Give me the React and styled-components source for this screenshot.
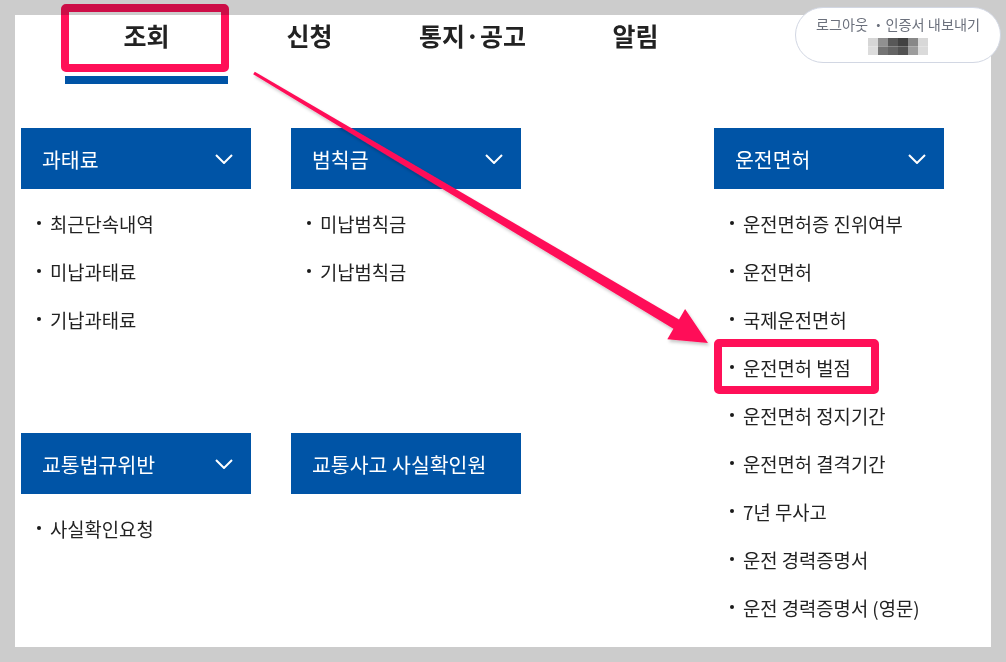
import React from 'react';
import styled, { createGlobalStyle } from 'styled-components';

const GlobalStyle = createGlobalStyle`
  html, body { margin: 0; padding: 0; background: #cccccc; }
  body { font-family: "Noto Sans CJK KR", "Noto Sans", sans-serif; }
  * { box-sizing: border-box; }
`;

const Page = styled.div`
  position: relative;
  width: 1006px;
  height: 662px;
  padding: 15px;
  overflow: hidden;
`;

const Panel = styled.main`
  background: #ffffff;
  width: 976px;
  height: 632px;
  padding-left: 6px;
`;

const Nav = styled.nav`
  display: flex;
  padding-left: 44px;
`;

const Tab = styled.div`
  width: 163px;
  height: 69px;
  display: flex;
  justify-content: center;
  align-items: flex-start;
  line-height: 40px;
  font-size: 25px;
  font-weight: 700;
  color: #222;
  border-bottom: 8px solid ${(p) => (p.$active ? '#0054a6' : 'transparent')};
`;

const Content = styled.div`
  display: flex;
  align-items: flex-start;
  gap: 193px;
  margin-top: 44px;
`;

const LeftGrid = styled.div`
  display: grid;
  grid-template-columns: 230px 230px;
  column-gap: 40px;
  row-gap: 90px;
  align-items: start;
  align-content: start;
`;

const Section = styled.section`
  display: flex;
  flex-direction: column;
  width: 230px;
`;

const Header = styled.div`
  height: 61px;
  background: #0054a6;
  color: #fff;
  display: flex;
  align-items: center;
  justify-content: space-between;
  padding: 0 18px 0 21px;
  font-size: 20.5px;
`;

const List = styled.ul`
  list-style: none;
  margin: 0;
  padding: 10px 0 0;
`;

const Item = styled.li`
  height: 48px;
  display: flex;
  align-items: center;
  font-size: 18.8px;
  color: #222;
  white-space: nowrap;
  &::before {
    content: '';
    flex: none;
    width: 4px;
    height: 4px;
    border-radius: 50%;
    background: #1a1a1a;
    margin: 0 9px 0 16px;
  }
`;

const Pill = styled.div`
  position: absolute;
  left: 795px;
  top: 7px;
  width: 206px;
  height: 56px;
  border: 1px solid #d2d7e3;
  border-radius: 28px;
  background: #fff;
  display: flex;
  flex-direction: column;
  align-items: center;
  padding-top: 7px;
`;

const PillText = styled.div`
  font-size: 14.2px;
  line-height: 18px;
  color: #6b707c;
  white-space: nowrap;
`;

const Mosaic = styled.svg`
  margin-top: 5px;
  display: block;
`;

/* annotation highlight frame drawn over the screenshot */
const Highlight = styled.div`
  position: absolute;
  left: ${(p) => p.$x}px;
  top: ${(p) => p.$y}px;
  width: ${(p) => p.$w}px;
  height: ${(p) => p.$h}px;
  border: 8px solid #ff1058;
  border-radius: 5px;
  mix-blend-mode: multiply;
  pointer-events: none;
`;

const ArrowLayer = styled.svg`
  position: absolute;
  left: 0;
  top: 0;
  pointer-events: none;
`;

const Chevron = () => (
  <svg width="18" height="10" viewBox="0 0 18 10">
    <path d="M1 1 L9 9 L17 1" fill="none" stroke="#fff" strokeWidth="2" />
  </svg>
);

const Block = ({ title, items, chevron = true }) => (
  <Section>
    <Header>
      <span>{title}</span>
      {chevron && <Chevron />}
    </Header>
    {items && items.length > 0 && (
      <List>
        {items.map((t) => (
          <Item key={t}>{t}</Item>
        ))}
      </List>
    )}
  </Section>
);

const mosaicRows = [
  ['#d6d6d6', '#909090', '#585858', '#424242', '#888888', '#d8d8d8'],
  ['#dcdcdc', '#747474', '#646464', '#525252', '#9c9c9c', '#dadada'],
];

export default function App() {
  return (
    <>
      <GlobalStyle />
      <Page>
        <Panel>
          <Nav>
            <Tab $active>조회</Tab>
            <Tab>신청</Tab>
            <Tab>통지·공고</Tab>
            <Tab>알림</Tab>
          </Nav>
          <Content>
            <LeftGrid>
              <Block title="과태료" items={['최근단속내역', '미납과태료', '기납과태료']} />
              <Block title="범칙금" items={['미납범칙금', '기납범칙금']} />
              <Block title="교통법규위반" items={['사실확인요청']} />
              <Block title="교통사고 사실확인원" chevron={false} />
            </LeftGrid>
            <Block
              title="운전면허"
              items={[
                '운전면허증 진위여부',
                '운전면허',
                '국제운전면허',
                '운전면허 벌점',
                '운전면허 정지기간',
                '운전면허 결격기간',
                '7년 무사고',
                '운전 경력증명서',
                '운전 경력증명서 (영문)',
              ]}
            />
          </Content>
        </Panel>
        <Pill>
          <PillText>로그아웃 ・인증서 내보내기</PillText>
          <Mosaic width="60" height="17" viewBox="0 0 60 17">
            {mosaicRows.map((row, r) =>
              row.map((c, i) => (
                <rect key={`${r}-${i}`} x={i * 10} y={r * 8.5} width="10" height="8.5" fill={c} />
              ))
            )}
          </Mosaic>
        </Pill>
        <Highlight $x={61} $y={4} $w={168} $h={68} />
        <Highlight $x={714} $y={339} $w={165} $h={55} />
        <ArrowLayer width="1006" height="662" viewBox="0 0 1006 662">
          <defs>
            <filter id="shadow" x="-10%" y="-10%" width="120%" height="130%">
              <feDropShadow dx="1.5" dy="2.5" stdDeviation="1.8" floodColor="#000" floodOpacity="0.22" />
            </filter>
          </defs>
          <polygon
            filter="url(#shadow)"
            fill="#ff1058"
            points="254.8,71.7 679,319.4 685.1,309 708,343 667.3,339.2 673.4,328.8 253.2,74.3"
          />
        </ArrowLayer>
      </Page>
    </>
  );
}
